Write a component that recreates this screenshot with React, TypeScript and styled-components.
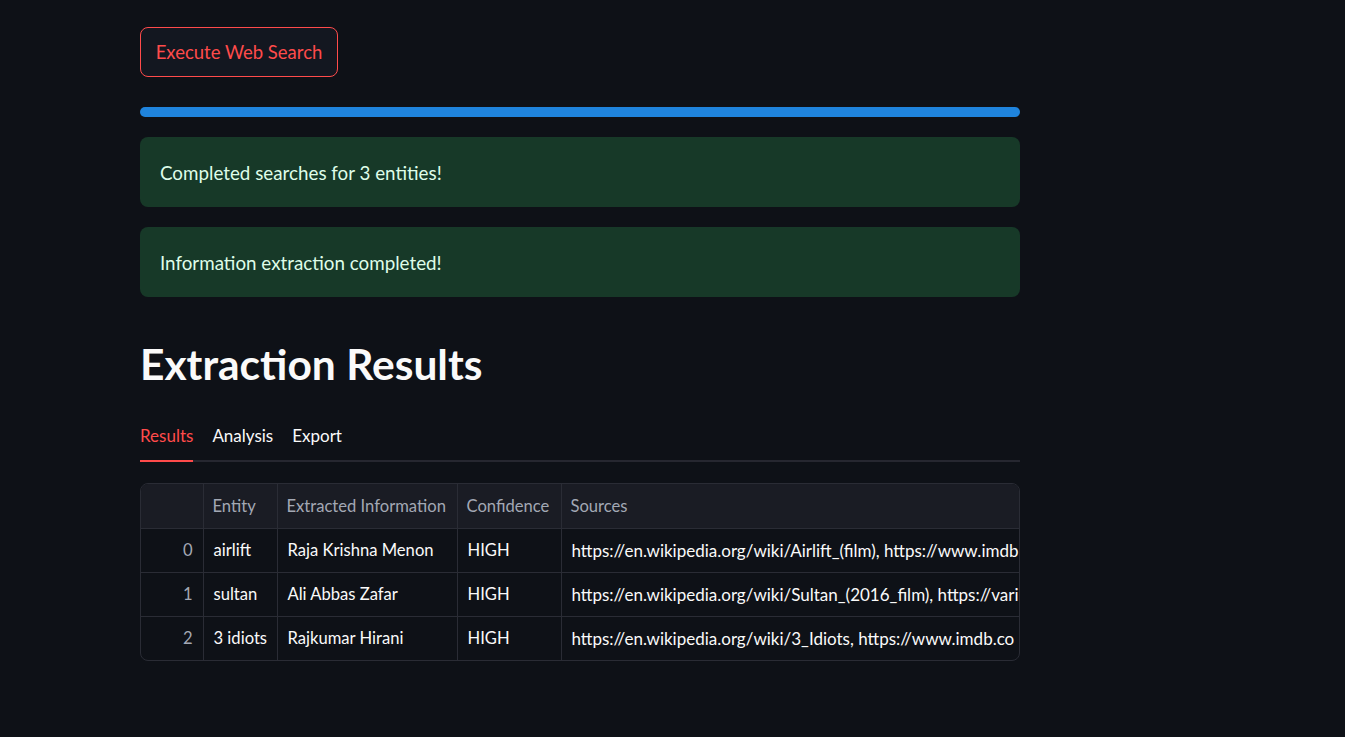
import React from "react";
import styled, { createGlobalStyle } from "styled-components";

const FONT = `"Lato", "Noto Sans", "Liberation Sans", sans-serif`;

const Global = createGlobalStyle`
  html, body { margin: 0; padding: 0; background: #0e1117; }
  body { font-family: ${FONT}; color: #fafafa; }
  * { box-sizing: border-box; }
`;

const Page = styled.div`
  min-height: 737px;
  background: #0e1117;
  padding: 27px 0 0 140px;
`;

const Column = styled.div`
  width: 880px;
  display: flex;
  flex-direction: column;
`;

const Button = styled.button`
  align-self: flex-start;
  width: 198px;
  height: 50px;
  padding: 0;
  border: 1px solid #ff4b4b;
  border-radius: 8px;
  background: #131720;
  color: #ff4b4b;
  font-family: ${FONT};
  font-size: 18.5px;
  cursor: pointer;
`;

const Progress = styled.div`
  margin-top: 30px;
  height: 10px;
  border-radius: 5px;
  background: #1f84dd;
`;

const Alert = styled.div`
  margin-top: 20px;
  height: 70px;
  display: flex;
  align-items: center;
  padding: 0 20px;
  border-radius: 8px;
  background: #173928;
  color: #dffde9;
  font-size: 18.8px;
`;

const Heading = styled.h2`
  margin: 39px 0 0;
  font-size: 42.5px;
  font-weight: 700;
  line-height: 56px;
  color: #fafafa;
`;

const Tabs = styled.div`
  margin-top: 27px;
  display: flex;
  gap: 19px;
  border-bottom: 2px solid #262730;
`;

const Tab = styled.div<{ $active?: boolean }>`
  padding: 6px 0 16px;
  margin-bottom: -2px;
  font-size: 17px;
  color: ${(p) => (p.$active ? "#ff4b4b" : "#fafafa")};
  box-shadow: ${(p) => (p.$active ? "inset 0 -2px 0 #ff4b4b" : "none")};
`;

const TableWrap = styled.div`
  margin-top: 21px;
  border: 1px solid #2a2c35;
  border-radius: 8px;
  overflow: hidden;
`;

const Table = styled.table`
  width: 100%;
  border-collapse: collapse;
  table-layout: fixed;
  font-size: 16.6px;
`;

const Th = styled.th<{ $w?: number }>`
  width: ${(p) => (p.$w ? `${p.$w}px` : "auto")};
  height: 44px;
  padding: 0 9px;
  text-align: left;
  white-space: nowrap;
  overflow: hidden;
  font-weight: 400;
  color: #a3a8b4;
  background: #1a1c24;
  border-right: 1px solid #2a2c35;
  border-bottom: 1px solid #2a2c35;
  &:last-child { border-right: none; }
`;

const Td = styled.td<{ $index?: boolean; $wide?: boolean }>`
  height: 44px;
  padding: 0 10px;
  white-space: nowrap;
  overflow: hidden;
  text-align: ${(p) => (p.$index ? "right" : "left")};
  color: ${(p) => (p.$index ? "#a3a8b4" : "#fafafa")};
  font-size: ${(p) => (p.$wide ? "17px" : "inherit")};
  border-right: 1px solid #2a2c35;
  border-bottom: 1px solid #2a2c35;
  &:last-child { border-right: none; }
  tr:last-child & { border-bottom: none; }
`;

const rows = [
  ["airlift", "Raja Krishna Menon", "HIGH", "https://en.wikipedia.org/wiki/Airlift_(film), https://www.imdb"],
  ["sultan", "Ali Abbas Zafar", "HIGH", "https://en.wikipedia.org/wiki/Sultan_(2016_film), https://vari"],
  ["3 idiots", "Rajkumar Hirani", "HIGH", "https://en.wikipedia.org/wiki/3_Idiots, https://www.imdb.co"],
];

export default function App() {
  return (
    <>
      <Global />
      <Page>
        <Column>
          <Button>Execute Web Search</Button>
          <Progress />
          <Alert>Completed searches for 3 entities!</Alert>
          <Alert>Information extraction completed!</Alert>
          <Heading>Extraction Results</Heading>
          <Tabs>
            <Tab $active>Results</Tab>
            <Tab>Analysis</Tab>
            <Tab>Export</Tab>
          </Tabs>
          <TableWrap>
            <Table>
              <thead>
                <tr>
                  <Th $w={62}></Th>
                  <Th $w={74}>Entity</Th>
                  <Th $w={180}>Extracted Information</Th>
                  <Th $w={104}>Confidence</Th>
                  <Th>Sources</Th>
                </tr>
              </thead>
              <tbody>
                {rows.map((r, i) => (
                  <tr key={i}>
                    <Td $index>{i}</Td>
                    {r.map((c, j) => (
                      <Td key={j} $wide={j === 3}>{c}</Td>
                    ))}
                  </tr>
                ))}
              </tbody>
            </Table>
          </TableWrap>
        </Column>
      </Page>
    </>
  );
}
